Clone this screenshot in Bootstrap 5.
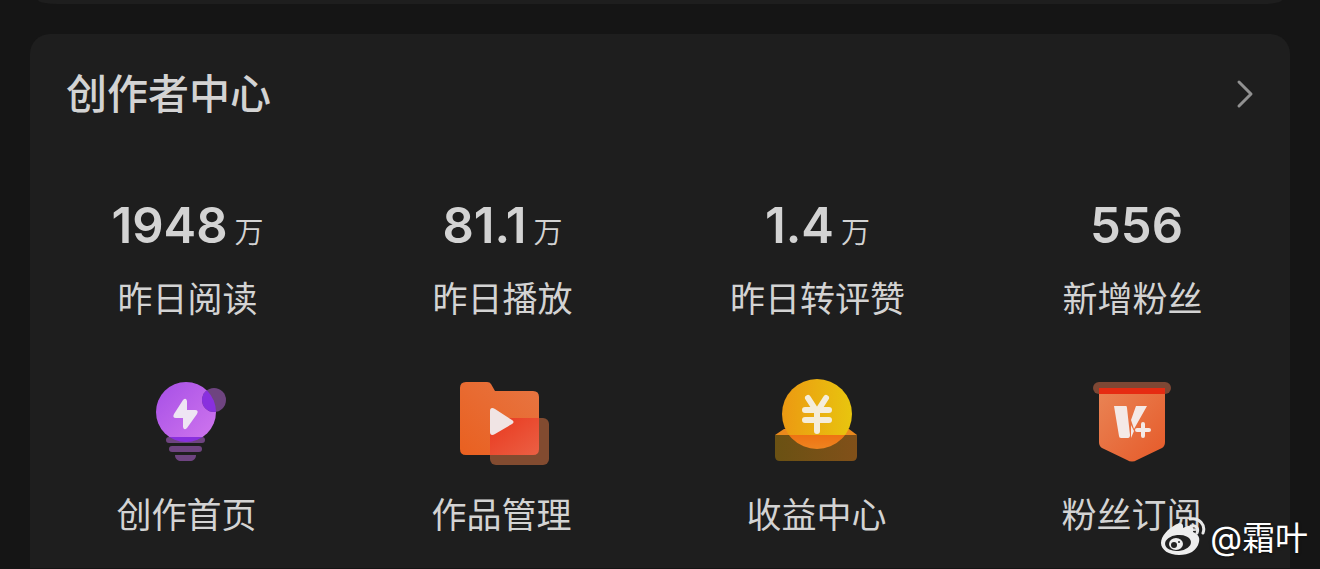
<!DOCTYPE html>
<html lang="zh-CN" data-bs-theme="dark">
<head>
<meta charset="utf-8">
<meta name="viewport" content="width=device-width, initial-scale=1">
<title>创作者中心</title>
<link href="https://cdn.jsdelivr.net/npm/bootstrap@5.3.0/dist/css/bootstrap.min.css" rel="stylesheet">
<script src="https://cdn.jsdelivr.net/npm/bootstrap@5.3.0/dist/js/bootstrap.bundle.min.js" defer></script>
<style>
  body { background: #151515; color: #d3d3d3; font-family: Inter, "Noto Sans CJK SC", sans-serif; overflow-x: hidden; }
  a { color: inherit; text-decoration: none; }
  .page { padding: 0 30px; }
  .panel { background: #1e1e1e; border: 0; border-radius: 20px 20px 0 0; color: inherit; }
  .panel-prev { height: 4px; border-radius: 0 0 20px 20px / 0 0 4px 4px; margin: 0 8px 30px; }
  .panel-head { padding: 30px 36px 0; }
  .panel-title { font-size: 41px; font-weight: 500; line-height: 60px; color: #d3d3d3; }
  .stats { padding-top: 73px; }
  .stat-value { font-size: 49px; font-weight: 600; line-height: 58px; height: 58px; }
  .stat-unit { font-size: 29px; font-weight: 350; line-height: 1; margin-left: 7px; }
  .item-label { font-size: 35px; line-height: 48px; margin-top: 20px; }
  .tools { padding: 49px 0 29px; }
  .tools a { padding-right: 2px; }
  .tools .item-label { margin-top: 19px; }
  .watermark { right: 12px; bottom: 6px; color: #fff; font-size: 33px; line-height: 48px; text-shadow: 0 1px 3px #0008; }
</style>
</head>
<body>
<main class="page position-relative">
  <div class="panel panel-prev"></div>
  <section class="card panel">
    <a href="#" class="panel-head d-flex align-items-center justify-content-between">
      <h1 class="panel-title m-0">创作者中心</h1>
      <svg width="20" height="32" viewBox="0 0 20 32" fill="none" stroke="#919191" stroke-width="3" stroke-linecap="round" stroke-linejoin="round" aria-hidden="true"><path d="M5 4l12 12L5 28"/></svg>
    </a>
    <div class="stats row g-0 text-center">
      <div class="col-3"><div class="stat-value">1948<span class="stat-unit">万</span></div><div class="item-label">昨日阅读</div></div>
      <div class="col-3"><div class="stat-value">81.1<span class="stat-unit">万</span></div><div class="item-label">昨日播放</div></div>
      <div class="col-3"><div class="stat-value">1.4<span class="stat-unit">万</span></div><div class="item-label">昨日转评赞</div></div>
      <div class="col-3"><div class="stat-value ps-2">556</div><div class="item-label">新增粉丝</div></div>
    </div>
    <nav class="tools row g-0 text-center" aria-label="创作工具">
      <a href="#" class="col-3 d-flex flex-column align-items-center">
        <svg width="100" height="100" viewBox="0 0 100 100" aria-hidden="true">
          <defs>
            <linearGradient id="bulb" x1="0" y1="0" x2="1" y2="1"><stop stop-color="#a64fe6"/><stop offset="1" stop-color="#d177ee"/></linearGradient>
            <clipPath id="bulbClip"><circle cx="49" cy="40" r="30"/></clipPath>
          </defs>
          <circle cx="49" cy="40" r="30" fill="url(#bulb)"/>
          <g fill="#6e4480"><circle cx="77" cy="28" r="12"/><rect x="29" y="65" width="39" height="6" rx="3"/><rect x="32" y="74" width="33" height="6" rx="3"/><path d="M38 83h21c0 4-3 6-6 6h-9c-3 0-6-2-6-6z"/></g>
          <g clip-path="url(#bulbClip)" fill="#8930de"><circle cx="77" cy="28" r="12"/><rect x="29" y="65" width="39" height="6" rx="3"/></g>
          <path d="M46 28L37 42q-2 4 2 4h7v9q1 4 4 1l10-14q2-4-2-4h-8v-9q-1-4-4-1z" fill="#eee5f3"/>
        </svg>
        <span class="item-label">创作首页</span>
      </a>
      <a href="#" class="col-3 d-flex flex-column align-items-center">
        <svg width="100" height="100" viewBox="0 0 100 100" aria-hidden="true">
          <defs>
            <linearGradient id="folder" x1="0" y1="1" x2="1" y2="0"><stop stop-color="#e96020"/><stop offset="1" stop-color="#e77542"/></linearGradient>
            <linearGradient id="overlap" x1="0" y1="0" x2="1" y2="1"><stop stop-color="#e9391f"/><stop offset="1" stop-color="#eb6044"/></linearGradient>
          </defs>
          <path d="M14 10h21q3 0 4 2l4 7h38q6 0 6 6v52q0 6-6 6H14q-6 0-6-6V16q0-6 6-6z" fill="url(#folder)"/>
          <rect x="38" y="46" width="59" height="47" rx="6" fill="#824b30"/>
          <path d="M38 46h49v31q0 6-6 6H38z" fill="url(#overlap)"/>
          <path d="M38 39c0-3 2-4 5-2l17 11c2 1 2 3 0 4L43 62c-3 2-5 1-5-2z" fill="#f0e4e4"/>
        </svg>
        <span class="item-label">作品管理</span>
      </a>
      <a href="#" class="col-3 d-flex flex-column align-items-center">
        <svg width="100" height="100" viewBox="0 0 100 100" aria-hidden="true">
          <defs>
            <linearGradient id="coin"><stop stop-color="#ec9912"/><stop offset="1" stop-color="#e8c50e"/></linearGradient>
            <linearGradient id="tray"><stop stop-color="#6a5113"/><stop offset="1" stop-color="#815019"/></linearGradient>
            <linearGradient id="coinBase" x1="0" y1="0" x2="0" y2="1"><stop offset="0.700" stop-color="#ee6a0c"/><stop offset="1" stop-color="#ee8420"/></linearGradient>
            <clipPath id="trayClip"><rect x="8" y="63" width="82" height="28"/></clipPath>
          </defs>
          <path d="M8 63l9-6h65l8 6z" fill="#ea891d"/>
          <circle cx="50" cy="42" r="35" fill="url(#coin)"/>
          <path d="M8 63h82v21q0 5-5 5H13q-5 0-5-5z" fill="url(#tray)"/>
          <circle cx="50" cy="42" r="35" fill="url(#coinBase)" clip-path="url(#trayClip)"/>
          <path d="M41 26l9 14 9-14M38 38h24M38 48h24M50 40v19" fill="none" stroke="#f5edda" stroke-width="6" stroke-linecap="round" stroke-linejoin="round"/>
        </svg>
        <span class="item-label">收益中心</span>
      </a>
      <a href="#" class="col-3 d-flex flex-column align-items-center">
        <svg width="100" height="100" viewBox="0 0 100 100" aria-hidden="true">
          <defs><linearGradient id="flag" x1="0" y1="0" x2="1" y2="1"><stop stop-color="#e98455"/><stop offset="1" stop-color="#e65a29"/></linearGradient></defs>
          <rect x="11" y="10" width="78" height="12" rx="6" fill="#7e4734"/>
          <path d="M17 16h66v54q0 4-3 6L55 88q-5 3-10 0L20 76q-3-2-3-6z" fill="url(#flag)"/>
          <path d="M17 16h66v6H17z" fill="#e62b12"/>
          <path d="M32 34h12q1 0 1 2l3 27q0 3-2 3h-7q-2 0-2-2zM54 34h11L52 57l-3-9zM49 53l3 6-3 7z" fill="#f4e9e6"/>
          <path d="M61 52v12M55 58h12" stroke="#f4e9e6" stroke-width="4" stroke-linecap="round"/>
        </svg>
        <span class="item-label">粉丝订阅</span>
      </a>
    </nav>
  </section>
  <div class="watermark position-absolute d-flex align-items-center">
    <svg width="46" height="42" viewBox="0 0 46 42" class="me-1" aria-hidden="true">
      <path d="M15 8c5-3 9-2 8 3 6-3 12-2 10 4 5 2 7 5 6 10-2 9-10 13-20 13S1 33 1 26C1 19 8 12 15 8z" fill="#eee"/>
      <ellipse cx="18" cy="26" rx="13" ry="8" fill="#222" transform="rotate(-6 18 26)"/>
      <ellipse cx="16" cy="27" rx="7" ry="6" fill="#eee"/>
      <circle cx="14" cy="28" r="3" fill="#222"/><circle cx="19" cy="25" r="1" fill="#222"/>
      <path d="M30 2c9-2 16 6 13 14M31 9c5-1 8 2 6 7" fill="none" stroke="#e8e8e8" stroke-width="3" stroke-linecap="round"/>
    </svg>
    <span>@霜叶</span>
  </div>
</main>
</body>
</html>
